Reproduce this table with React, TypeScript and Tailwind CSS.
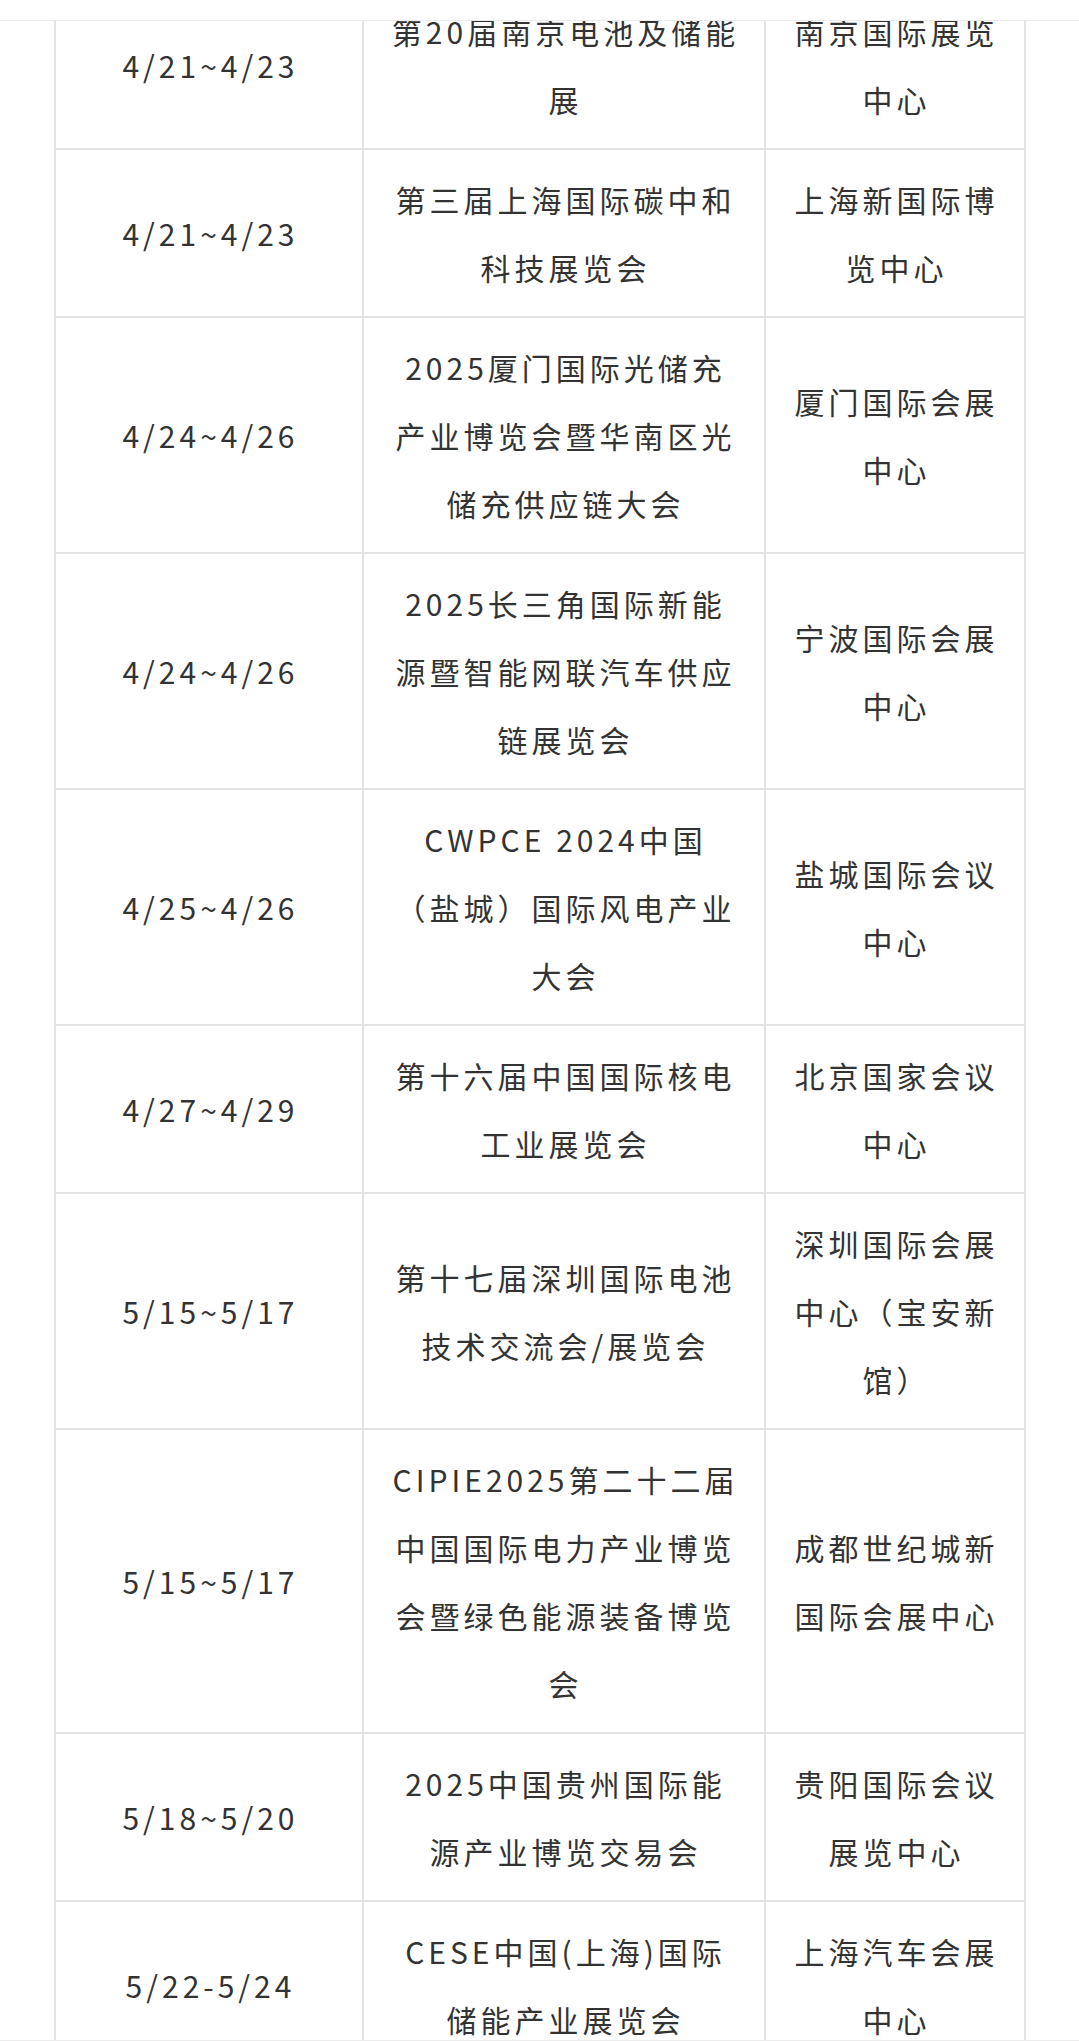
const rows: { date: string; name: string[]; venue: string[] }[] = [
  { date: "4/21~4/23", name: ["第20届南京电池及储能", "展"], venue: ["南京国际展览", "中心"] },
  { date: "4/21~4/23", name: ["第三届上海国际碳中和", "科技展览会"], venue: ["上海新国际博", "览中心"] },
  {
    date: "4/24~4/26",
    name: ["2025厦门国际光储充", "产业博览会暨华南区光", "储充供应链大会"],
    venue: ["厦门国际会展", "中心"],
  },
  {
    date: "4/24~4/26",
    name: ["2025长三角国际新能", "源暨智能网联汽车供应", "链展览会"],
    venue: ["宁波国际会展", "中心"],
  },
  {
    date: "4/25~4/26",
    name: ["CWPCE 2024中国", "（盐城）国际风电产业", "大会"],
    venue: ["盐城国际会议", "中心"],
  },
  { date: "4/27~4/29", name: ["第十六届中国国际核电", "工业展览会"], venue: ["北京国家会议", "中心"] },
  {
    date: "5/15~5/17",
    name: ["第十七届深圳国际电池", "技术交流会/展览会"],
    venue: ["深圳国际会展", "中心（宝安新", "馆）"],
  },
  {
    date: "5/15~5/17",
    name: ["CIPIE2025第二十二届", "中国国际电力产业博览", "会暨绿色能源装备博览", "会"],
    venue: ["成都世纪城新", "国际会展中心"],
  },
  { date: "5/18~5/20", name: ["2025中国贵州国际能", "源产业博览交易会"], venue: ["贵阳国际会议", "展览中心"] },
  { date: "5/22-5/24", name: ["CESE中国(上海)国际", "储能产业展览会"], venue: ["上海汽车会展", "中心"] },
];

function Lines({ lines }: { lines: string[] }) {
  return (
    <div className="flex flex-col items-center">
      {lines.map((l, i) => (
        <span key={i} className="whitespace-nowrap pl-[4px]">
          {l}
        </span>
      ))}
    </div>
  );
}

export default function App() {
  const cell =
    "flex items-center justify-center border-r-2 border-b-2 border-[#e3e3e3] px-5 py-[15px] text-center";

  return (
    <div className="relative h-[2041px] w-full overflow-hidden bg-white font-['Noto_Sans_CJK_SC','Noto_Sans',sans-serif] text-[30px] leading-[68px] tracking-[4px] text-[#333]">
      <div className="mx-auto -mt-[18px] w-[972px] border-l-2 border-[#e3e3e3]">
        {rows.map((r, i) => (
          <div key={i} className="grid grid-cols-[308px_402px_260px]">
            <div className={cell}>
              <span className="whitespace-nowrap pl-[4px]">{r.date}</span>
            </div>
            <div className={cell}>
              <Lines lines={r.name} />
            </div>
            <div className={cell}>
              <Lines lines={r.venue} />
            </div>
          </div>
        ))}
      </div>

      {/* strip over the top of the first row */}
      <div className="absolute inset-x-0 top-0 h-[21px] border-b border-[#ececec] bg-white" />
      <div className="absolute inset-x-0 bottom-0 h-px bg-[#ececec]" />
    </div>
  );
}
